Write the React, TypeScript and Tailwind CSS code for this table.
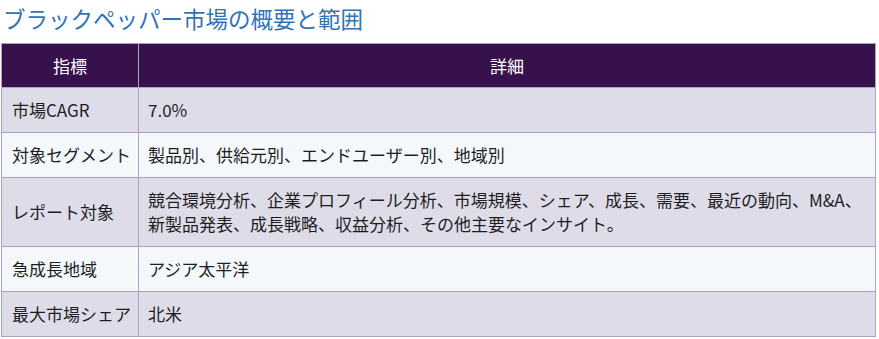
import React from 'react';

const rows: [string, React.ReactNode][] = [
  ['市場CAGR', '7.0%'],
  ['対象セグメント', '製品別、供給元別、エンドユーザー別、地域別'],
  [
    'レポート対象',
    <>
      競合環境分析、企業プロフィール分析、市場規模、シェア、成長、需要、最近の動向、M&amp;A、
      <br />
      新製品発表、成長戦略、収益分析、その他主要なインサイト。
    </>,
  ],
  ['急成長地域', 'アジア太平洋'],
  ['最大市場シェア', '北米'],
];

const App: React.FC = () => {
  return (
    <div
      className="w-[879px] h-[339px] bg-white pl-[1px] pt-[3px]"
      style={{ fontFamily: '"Noto Sans CJK JP", "Noto Sans", sans-serif' }}
    >
      <h2 className="text-[22.5px] leading-[30px] text-[#2f74b8] pl-[2px] font-normal">
        ブラックペッパー市場の概要と範囲
      </h2>
      <table className="mt-[10px] w-[875px] table-fixed border-collapse text-[17px] text-[#1e1e1e]">
        <thead>
          <tr className="bg-[#37114b] text-white">
            <th className="w-[137px] h-[44px] border border-[#a9a3bf] font-normal text-center">指標</th>
            <th className="h-[44px] border border-[#a9a3bf] font-normal text-center">詳細</th>
          </tr>
        </thead>
        <tbody>
          {rows.map(([k, v], i) => (
            <tr key={k} className={i % 2 === 0 ? 'bg-[#dfdcea]' : 'bg-[#f4f8fb]'}>
              <td className="border border-[#a9a3bf] pl-[10px] pr-[2px] py-[10px] leading-[24px] whitespace-nowrap">{k}</td>
              <td className="border border-[#a9a3bf] px-[9px] py-[10px] leading-[24px] whitespace-nowrap">{v}</td>
            </tr>
          ))}
        </tbody>
      </table>
    </div>
  );
};

export default App;
